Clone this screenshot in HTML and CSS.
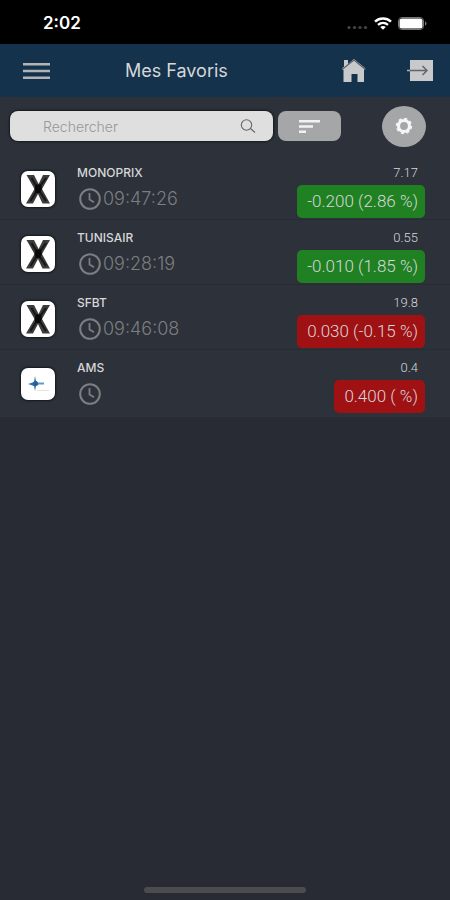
FILE: index.html
```html
<!DOCTYPE html>
<html lang="fr">
<head>
  <meta charset="UTF-8">
  <meta name="viewport" content="width=device-width, initial-scale=1.0">
  <title>Mes Favoris</title>
  <link rel="stylesheet" href="styles.css">
</head>
<body>
  <!-- Shared icons -->
  <svg class="sprite" aria-hidden="true">
    <symbol id="clock" viewBox="0 0 22 22">
      <circle cx="11" cy="11" r="9.8" fill="none" stroke="#7c7e82" stroke-width="2"/>
      <path d="M10.5 5v6.5l4.5 2.8" fill="none" stroke="#7c7e82" stroke-width="1.8"/>
    </symbol>
    <symbol id="logo-x" viewBox="0 0 34 36">
      <path d="M5.500 4h7.500l4.600 9L22 4h7l-8 14 8 14.500h-7.500L17 23l-5 9.500H5l8.500-14.500z" fill="#3c3c3c"/>
      <path d="M10.500 7l6.500 11M25 7l-8 11M9.500 30l7.500-12M25 30l-8-12" stroke="#161616" stroke-width="2"/>
      <path d="M15 13.500h5l1 4.500-2 4h-4l-1.500-4z" fill="#090909"/>
    </symbol>
  </svg>

  <div class="app">
    <div class="status-bar">
      <span class="status-time">2:02</span>
      <div class="status-icons">
        <svg width="21" height="5" viewBox="0 0 21 5" fill="#464646">
          <circle cx="2" cy="2.500" r="1.600"/><circle cx="7.500" cy="2.500" r="1.600"/><circle cx="13" cy="2.500" r="1.600"/><circle cx="18.500" cy="2.500" r="1.600"/>
        </svg>
        <svg width="18" height="13" viewBox="0 0 18 13" fill="none" stroke="#fff" stroke-width="2.400">
          <path d="M1 4.600c4.500-4.200 11.500-4.200 16 0M4 7.800c3-2.600 7-2.600 10 0"/>
          <path d="M9 12.800L6.200 10c1.600-1.400 4-1.400 5.600 0z" fill="#fff" stroke="none"/>
        </svg>
        <svg width="29" height="13" viewBox="0 0 29 13">
          <rect x=".5" y=".5" width="25" height="12" rx="3.500" fill="none" stroke="#777"/>
          <rect x="1.500" y="1.500" width="23" height="10" rx="2.500" fill="#fff"/>
          <path d="M27 4.500c2 .6 2 3.400 0 4z" fill="#777"/>
        </svg>
      </div>
    </div>

    <header class="header">
      <button class="icon-btn" aria-label="Menu">
        <svg width="27" height="16" viewBox="0 0 27 16" fill="#b4b4b6">
          <path d="M0 0h27v2.500H0zM0 6.750h27v2.500H0zM0 13.500h27V16H0z"/>
        </svg>
      </button>
      <h1>Mes Favoris</h1>
      <button class="icon-btn" aria-label="Accueil">
        <svg width="26" height="25" viewBox="0 0 26 25">
          <path d="M3 2h4v4l6-5 11 9v1l-1 1v12h-6.500v-8h-6v8H2.500V12L1 10.500l2-2z" fill="#c8c9cb"/>
          <path d="M1 11.500L13 2l11.500 9.500" fill="none" stroke="#59636d" stroke-width="1.200"/>
        </svg>
      </button>
      <button class="icon-btn" aria-label="Se déconnecter">
        <svg width="26" height="21" viewBox="0 0 26 21">
          <path d="M3 0h23v21H3z" fill="#c8c9cb"/>
          <path d="M0 10.500h4" stroke="#aaadb0" stroke-width="1.600"/>
          <path d="M3 10.500h17M15.500 6l4.500 4.500-4.500 4.500" fill="none" stroke="#62666b" stroke-width="1.500"/>
        </svg>
      </button>
    </header>

    <div class="toolbar">
      <div class="search">
        <input type="text" placeholder="Rechercher" aria-label="Rechercher">
        <svg width="16" height="14" viewBox="0 0 16 14" fill="none" stroke="#67676a" stroke-width="1.100">
          <circle cx="6.500" cy="6" r="5.200"/>
          <path d="M10.500 9.500l4.500 4"/>
        </svg>
      </div>
      <button class="sort-btn" aria-label="Trier">
        <svg width="21" height="13" viewBox="0 0 21 13" fill="#f2f2f2">
          <path d="M0 0h21v2.500H0zM0 5.200h14v2.500H0zM0 10.400h7v2.500H0z"/>
        </svg>
      </button>
      <button class="settings-btn" aria-label="Paramètres">
        <svg width="18" height="18" viewBox="0 0 18 18" fill="none" stroke="#f5f5f5">
          <circle cx="9" cy="9" r="5.500" stroke-width="3.200"/>
          <circle cx="9" cy="9" r="7.200" stroke-width="2" stroke-dasharray="3 2.655"/>
        </svg>
      </button>
    </div>

    <ul class="quotes">
      <li class="quote">
        <svg class="logo" viewBox="0 0 34 36" aria-hidden="true"><use href="#logo-x"/></svg>
        <div class="info">
          <span class="name">MONOPRIX</span>
          <span class="time"><svg width="22" height="22"><use href="#clock"/></svg>09:47:26</span>
        </div>
        <div class="values">
          <span class="price">7.17</span>
          <span class="change green">-0.200 (2.86 %)</span>
        </div>
      </li>
      <li class="quote">
        <svg class="logo" viewBox="0 0 34 36" aria-hidden="true"><use href="#logo-x"/></svg>
        <div class="info">
          <span class="name">TUNISAIR</span>
          <span class="time"><svg width="22" height="22"><use href="#clock"/></svg>09:28:19</span>
        </div>
        <div class="values">
          <span class="price">0.55</span>
          <span class="change green">-0.010 (1.85 %)</span>
        </div>
      </li>
      <li class="quote">
        <svg class="logo" viewBox="0 0 34 36" aria-hidden="true"><use href="#logo-x"/></svg>
        <div class="info">
          <span class="name">SFBT</span>
          <span class="time"><svg width="22" height="22"><use href="#clock"/></svg>09:46:08</span>
        </div>
        <div class="values">
          <span class="price">19.8</span>
          <span class="change red">0.030 (-0.15 %)</span>
        </div>
      </li>
      <li class="quote">
        <svg class="logo logo-small" viewBox="0 0 34 32" aria-hidden="true">
          <path d="M14 8l1 5 3 3-3 2-1 5-1-5-6-2 6-2z" fill="#326fae"/>
          <circle cx="14.500" cy="15.500" r="2.500" fill="#285f9c"/>
          <path d="M17 15.500h6" stroke="#5c9bd0" stroke-width="2"/>
          <path d="M16 22.500h12" stroke="#e3e3e6"/>
        </svg>
        <div class="info">
          <span class="name">AMS</span>
          <span class="time"><svg width="22" height="22"><use href="#clock"/></svg></span>
        </div>
        <div class="values">
          <span class="price">0.4</span>
          <span class="change red">0.400 ( %)</span>
        </div>
      </li>
    </ul>

    <div class="home-indicator"></div>
  </div>
</body>
</html>
```

FILE: styles.css
```css
* {
  box-sizing: border-box;
}

body {
  margin: 0;
  background: #282b33;
  color: #d6d7d9;
  font-family: Inter, "Liberation Sans", sans-serif;
}

button {
  display: flex;
  flex-shrink: 0;
  align-items: center;
  justify-content: center;
  padding: 0;
  border: none;
  background: none;
  cursor: pointer;
}

svg {
  display: block;
  flex-shrink: 0;
}

.sprite {
  position: absolute;
  width: 0;
  height: 0;
}

.app {
  display: flex;
  flex-direction: column;
  min-height: 100vh;
}

/* Status bar */
.status-bar {
  display: flex;
  align-items: center;
  justify-content: space-between;
  height: 44px;
  padding: 2px 23px 0 43px;
  background: #000;
}

.status-time {
  color: #fff;
  font-size: 17px;
  font-weight: 600;
}

.status-icons {
  display: flex;
  align-items: center;
  gap: 6px;
}

.status-icons svg:first-child {
  align-self: flex-end;
}

/* Header */
.header {
  display: flex;
  align-items: center;
  height: 53px;
  padding: 0 17px 0 23px;
  background: #14324b;
}

.header h1 {
  flex: 1;
  margin: 0 0 0 75px;
  font-size: 18px;
  line-height: 24px;
  font-weight: 400;
}

.header .icon-btn:last-child {
  margin-left: 40px;
}

/* Search and filters */
.toolbar {
  display: flex;
  align-items: center;
  height: 58px;
  padding: 0 24px 0 10px;
  background: #2d3139;
}

.search {
  display: flex;
  flex: 1;
  align-items: center;
  min-width: 0;
  height: 30px;
  padding: 0 17px 0 33px;
  border-radius: 8px;
  background: #dfdfdf;
  box-shadow: 0 0 2px 1px #15181c;
}

.search input {
  flex: 1;
  min-width: 0;
  padding: 0;
  border: none;
  outline: none;
  background: transparent;
  font: 300 14px Inter, "Liberation Sans", sans-serif;
}

.search input::placeholder {
  color: #97989a;
}

.sort-btn {
  width: 63px;
  height: 30px;
  margin: 0 41px 0 5px;
  border-radius: 8px;
  background: #a5a6a7;
}

.settings-btn {
  width: 44px;
  height: 41px;
  border-radius: 50%;
  background: #a5a6a7;
}

/* Quotes */
.quotes {
  margin: 0;
  padding: 0 0 2px;
  background: #2d3139;
  list-style: none;
}

.quote {
  display: flex;
  align-items: center;
  height: 65px;
  padding: 3px 25px 0 21px;
  border-bottom: 1px solid #272b32;
}

.quote:last-child {
  border-bottom-color: transparent;
}

.logo {
  width: 34px;
  height: 36px;
  margin-right: 22px;
  border-radius: 7px;
  background: #fff;
  box-shadow: 0 0 2px 1px #15181c;
}

.logo-small {
  height: 32px;
}

.info {
  flex: 1;
  padding-top: 2px;
}

.name,
.price {
  display: block;
  line-height: 18px;
}

.name {
  font-size: 12px;
  font-weight: 500;
}

.time {
  display: flex;
  align-items: center;
  gap: 2px;
  height: 33px;
  padding-left: 2px;
  color: #7c7e82;
  font-size: 18px;
  font-weight: 300;
}

.values {
  display: flex;
  flex-direction: column;
  align-items: flex-end;
  padding-top: 5px;
  font-family: Roboto, "Liberation Sans", sans-serif;
  font-weight: 300;
}

.price {
  padding-right: 7px;
  font-size: 13px;
}

.change {
  margin-top: 3px;
  padding: 0 7px 0 10px;
  border-radius: 5px;
  font-size: 17px;
  line-height: 33px;
}

.green {
  background: #208122;
}

.red {
  background: #a01113;
}

.home-indicator {
  width: 162px;
  height: 6px;
  margin: auto auto 7px;
  border-radius: 3px;
  background: #4a4c50;
}
```
